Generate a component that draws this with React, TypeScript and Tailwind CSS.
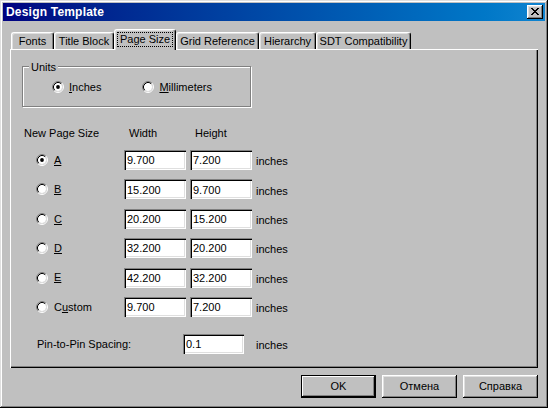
import React from 'react';

const bevelOut = 'shadow-[inset_-1px_-1px_#000,inset_1px_1px_#fff,inset_-2px_-2px_#808080,inset_2px_2px_#dfdfdf]';
const bevelIn = 'shadow-[inset_1px_1px_#808080,inset_2px_2px_#000,inset_-1px_-1px_#fff,inset_-2px_-2px_#dfdfdf]';

function Radio({ checked }: { checked?: boolean }) {
    return (
        <svg width="12" height="12" viewBox="0 0 12 12" className="shrink-0">
            <circle cx="6" cy="6" r="4" fill="#fff" />
            <path d="M2.11 9.89A5.5 5.5 0 0 1 9.89 2.11" fill="none" stroke="#808080" />
            <path d="M9.89 2.11A5.5 5.5 0 0 1 2.11 9.89" fill="none" stroke="#fff" />
            <path d="M2.82 9.18A4.5 4.5 0 0 1 9.18 2.82" fill="none" stroke="#000" />
            <path d="M9.18 2.82A4.5 4.5 0 0 1 2.82 9.18" fill="none" stroke="#dfdfdf" />
            {checked && <circle cx="6" cy="6" r="1.9" fill="#000" />}
        </svg>
    );
}

function Field({ value, w = 'w-[62px]' }: { value: string; w?: string }) {
    return (
        <div className={`${w} h-[20px] bg-white ${bevelIn} flex items-center pl-[3px] pt-px`}>
            {value}
        </div>
    );
}

function Tab({ label, w, active }: { label: string; w: string; active?: boolean }) {
    return (
        <div
            className={`relative ${w} flex items-center justify-center bg-[#c0c0c0] border-t border-l border-white border-r border-r-black rounded-t-[3px] shadow-[inset_-1px_0_#808080,inset_1px_1px_#dfdfdf] ${
                active ? 'h-[21px] -mb-px z-10 pb-[2px]' : 'h-[17px]'
            }`}
        >
            {active ? (
                <span className="border border-dotted border-black px-[2px] leading-[13px]">{label}</span>
            ) : (
                <span>{label}</span>
            )}
        </div>
    );
}

function Button({ label, isDefault }: { label: string; isDefault?: boolean }) {
    return (
        <button
            className={`w-[75px] h-[23px] flex items-center justify-center bg-[#c0c0c0] ${
                isDefault
                    ? 'border border-black shadow-[inset_-1px_-1px_#000,inset_1px_1px_#fff,inset_-2px_-2px_#808080]'
                    : bevelOut
            }`}
        >
            {label}
        </button>
    );
}

const sizes = [
    { key: 'A', rest: '', w: '9.700', h: '7.200', checked: true },
    { key: 'B', rest: '', w: '15.200', h: '9.700' },
    { key: 'C', rest: '', w: '20.200', h: '15.200' },
    { key: 'D', rest: '', w: '32.200', h: '20.200' },
    { key: 'E', rest: '', w: '42.200', h: '32.200' },
];

export default function App() {
    return (
        <div
            className={`w-[548px] h-[408px] bg-[#c0c0c0] p-[3px] flex flex-col text-[11px] text-black font-['Liberation_Sans',Arial,sans-serif] shadow-[inset_-1px_-1px_#000,inset_1px_1px_#dfdfdf,inset_-2px_-2px_#808080,inset_2px_2px_#fff]`}
        >
            {/* Title bar */}
            <div className="h-[18px] flex items-center justify-between bg-gradient-to-r from-[#000080] to-[#1084d0] pl-[3px] pr-[2px]">
                <span className="text-white font-bold text-[12px] tracking-[0.2px]">Design Template</span>
                <div className={`w-[16px] h-[14px] bg-[#c0c0c0] ${bevelOut} flex items-center justify-center pr-px pb-px`}>
                    <svg width="8" height="7" viewBox="0 0 8 7">
                        <path d="M0 0h2v1h1v1h2V1h1V0h2v1H7v1H6v1H5v1h1v1h1v1h1v1H6V6H5V5H3v1H2v1H0V6h1V5h1V4h1V3H2V2H1V1H0z" fill="#000" />
                    </svg>
                </div>
            </div>

            {/* Tabs */}
            <div className="mt-[8px] px-[7px] flex flex-col">
                <div className="h-[20px] flex items-end pl-px">
                    <Tab label="Fonts" w="w-[43px]" />
                    <Tab label="Title Block" w="w-[60px]" />
                    <Tab label="Page Size" w="w-[62px]" active />
                    <Tab label="Grid Reference" w="w-[83px]" />
                    <Tab label="Hierarchy" w="w-[57px]" />
                    <Tab label="SDT Compatibility" w="w-[95px]" />
                </div>

                {/* Panel */}
                <div className="h-[319px] bg-[#c0c0c0] shadow-[inset_1px_1px_#fff,inset_-1px_-1px_#000,inset_-2px_-2px_#808080] pt-[17px] flex flex-col">
                    {/* Units group */}
                    <div className="ml-[12px] w-[229px] h-[41px] relative border border-[#808080] shadow-[inset_1px_1px_#fff,1px_1px_#fff] flex items-center pt-[1px]">
                        <span className="absolute -top-[8px] left-[6px] px-[2px] bg-[#c0c0c0]">Units</span>
                        <div className="flex items-center ml-[29px] gap-[5px]">
                            <Radio checked />
                            <span>
                                <span className="underline">I</span>nches
                            </span>
                        </div>
                        <div className="flex items-center ml-[41px] gap-[5px]">
                            <Radio />
                            <span>
                                <span className="underline">M</span>illimeters
                            </span>
                        </div>
                    </div>

                    {/* Header */}
                    <div className="mt-[20px] h-[13px] flex items-center pl-[14px]">
                        <span className="w-[105px]">New Page Size</span>
                        <span className="w-[66px]">Width</span>
                        <span>Height</span>
                    </div>

                    {/* Size rows */}
                    <div className="mt-[10px] flex flex-col gap-[9.4px] pl-[26px]">
                        {sizes.map((s) => (
                            <div key={s.key} className="h-[20px] flex items-center">
                                <div className="w-[88px] flex items-center gap-[6px]">
                                    <Radio checked={s.checked} />
                                    <span className="underline">{s.key}</span>
                                </div>
                                <Field value={s.w} />
                                <div className="ml-[4px]">
                                    <Field value={s.h} />
                                </div>
                                <span className="ml-[4px] pt-[3px]">inches</span>
                            </div>
                        ))}
                        <div className="h-[20px] flex items-center">
                            <div className="w-[88px] flex items-center gap-[6px]">
                                <Radio />
                                <span>
                                    C<span className="underline">u</span>stom
                                </span>
                            </div>
                            <Field value="9.700" />
                            <div className="ml-[4px]">
                                <Field value="7.200" />
                            </div>
                            <span className="ml-[4px] pt-[3px]">inches</span>
                        </div>
                    </div>

                    {/* Pin spacing */}
                    <div className="mt-[17px] h-[20px] flex items-center pl-[27px]">
                        <span className="w-[146px]">Pin-to-Pin Spacing:</span>
                        <Field value="0.1" w="w-[61px]" />
                        <span className="ml-[12px] pt-[3px]">inches</span>
                    </div>
                </div>
            </div>

            {/* Buttons */}
            <div className="mt-[7px] px-[7px] flex justify-end gap-[6px]">
                <Button label="OK" isDefault />
                <Button label="Отмена" />
                <Button label="Справка" />
            </div>
        </div>
    );
}
